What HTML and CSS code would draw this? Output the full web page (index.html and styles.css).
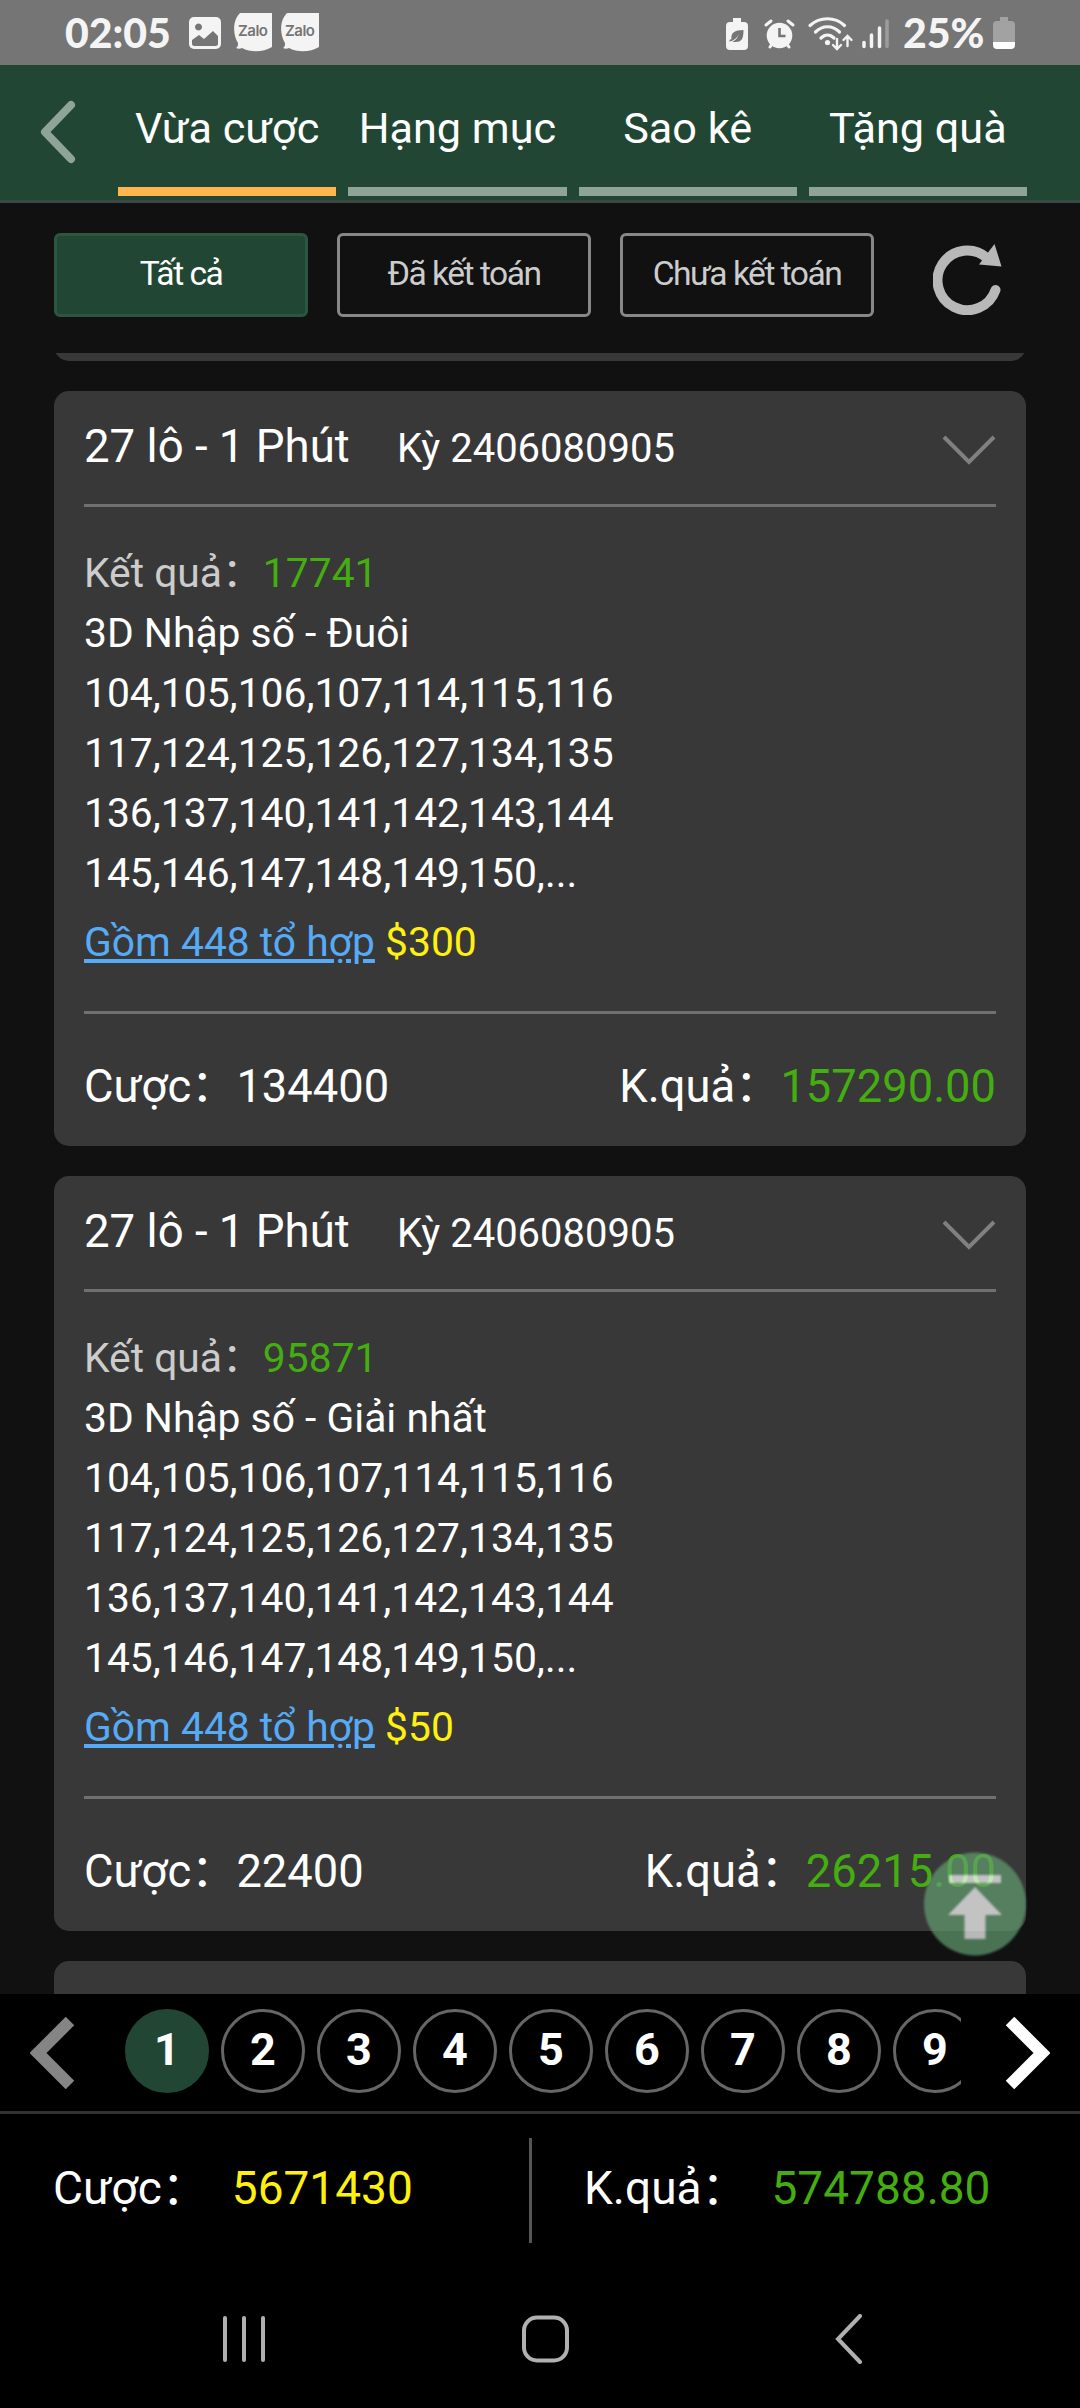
FILE: index.html
```html
<!DOCTYPE html>
<html lang="vi">
  <head>
    <meta charset="UTF-8" />
    <meta name="viewport" content="width=device-width, initial-scale=1.0" />
    <title>Vừa cược</title>
    <link rel="stylesheet" href="styles.css">
  </head>
  <body>
    <div class="status-bar">
      <span class="clock">02:05</span>
      <svg class="icon-photo" width="32" height="32" viewBox="0 0 32 32">
        <path fill="#f4f4f4" fill-rule="evenodd" d="M5 0h22a5 5 0 0 1 5 5v22a5 5 0 0 1-5 5H5a5 5 0 0 1-5-5V5a5 5 0 0 1 5-5zM9.500 6.500a3.500 3.500 0 1 0 .01 0zM3 23v3.500a2.500 2.500 0 0 0 2.500 2.500h21a2.500 2.500 0 0 0 2.500-2.500V19l-5-5-9 8-5-4z" />
      </svg>
      <span class="zalo">
        <svg width="38" height="39" viewBox="0 0 38 39"><path fill="#f4f4f4" d="M6 0h32v34c-8 5-21 6-30 1-2 1-4 1-6 0 2-1 2-3 2-5C-1 22-2 8 6 0z" /></svg>
        <span class="zalo-text">Zalo</span>
      </span>
      <span class="zalo">
        <svg width="38" height="39" viewBox="0 0 38 39"><path fill="#f4f4f4" d="M6 0h32v34c-8 5-21 6-30 1-2 1-4 1-6 0 2-1 2-3 2-5C-1 22-2 8 6 0z" /></svg>
        <span class="zalo-text">Zalo</span>
      </span>
      <svg class="status-icons" width="166" height="40" viewBox="725 12 166 40" fill="#f4f4f4">
        <path d="M733 17h8v4h3q4 0 4 4v20q0 4-4 4h-14q-4 0-4-4V25q0-4 4-4h3z" />
        <path fill="#757575" d="M743.500 29c0 9-2 12-8 12-2 0-3 0-4-1l-2 1 0-2 2-1c-1-6 3-9 12-9z" />
        <path d="M729 41q7-2 10-8-3 8-10 9z" />
        <circle cx="779.500" cy="34.500" r="12.800" />
        <path d="M766 24l5-4M793 24l-5-4M770 46l2-3M789 46l-2-3" stroke="#f4f4f4" stroke-width="3" stroke-linecap="round" />
        <path d="M779.500 27v8h6" fill="none" stroke="#757575" stroke-width="2.600" />
        <g fill="none" stroke="#f4f4f4" stroke-width="3.200" stroke-linecap="round">
          <path d="M810 24.500c10-9 25-9 34.500 0M815.500 31c7-7 17-7 24 0M821 37c4-4 9-4 13 0" />
          <path d="M837 38v9M833 44l4 4 4-4M847.500 45V36M843.500 39l4-4 4 4" stroke-width="2.400" />
        </g>
        <circle cx="827.500" cy="41.500" r="2.600" />
        <path d="M864 41.500v4M871.500 34v11.500M879.500 27v18.500" stroke="#f4f4f4" stroke-width="3.500" stroke-linecap="round" />
        <path d="M887 20v25.500" stroke="#9c9c9c" stroke-width="3.500" stroke-linecap="round" />
      </svg>
      <span class="battery-text">25%</span>
      <svg class="icon-battery" width="22" height="32" viewBox="0 0 22 32">
        <path fill="#a2a2a2" d="M7 0h8v4h3q4 0 4 4v17H0V8q0-4 4-4h3z" />
        <path fill="#fff" d="M0 25h22v3q0 4-4 4H4q-4 0-4-4z" />
      </svg>
    </div>

    <div class="header">
      <svg class="back" width="36" height="64" viewBox="0 0 36 64">
        <path d="M31 5L5 32l26 27" />
      </svg>
      <div class="tabs">
        <div class="tab active">Vừa cược</div>
        <div class="tab">Hạng mục</div>
        <div class="tab">Sao kê</div>
        <div class="tab">Tặng quà</div>
      </div>
    </div>

    <div class="filters">
      <button class="filter active">Tất cả</button>
      <button class="filter">Đã kết toán</button>
      <button class="filter">Chưa kết toán</button>
      <svg class="refresh" width="70" height="71" viewBox="0 0 70 71">
        <path d="M62.500 46A29.800 29.800 0 1 1 54 14" fill="none" stroke="#b8b8b8" stroke-width="10" stroke-linecap="round" />
        <path d="M61.500 0l7 22.500L46 20.500z" fill="#b8b8b8" />
      </svg>
    </div>

    <div class="list-wrap">
      <div class="list">
        <div class="card card-prev"></div>

        <div class="card">
          <div class="card-head">
            <span class="game-name">27 lô - 1 Phút</span>
            <span class="issue">Kỳ 2406080905</span>
            <svg class="arrow" width="54" height="32" viewBox="0 0 54 32"><path d="M2 3l25 25L52 3" /></svg>
          </div>
          <div class="card-body">
            <div class="line"><span class="label">Kết quả：</span><span class="win">17741</span></div>
            <div class="line">3D Nhập số - Đuôi</div>
            <div class="line">104,105,106,107,114,115,116</div>
            <div class="line">117,124,125,126,127,134,135</div>
            <div class="line">136,137,140,141,142,143,144</div>
            <div class="line">145,146,147,148,149,150,...</div>
            <div class="line combo"><a class="combo-link">Gồm 448 tổ hợp</a> <span class="unit">$300</span></div>
          </div>
          <div class="card-foot">
            <span>Cược：134400</span>
            <span>K.quả：<span class="win">157290.00</span></span>
          </div>
        </div>

        <div class="card">
          <div class="card-head">
            <span class="game-name">27 lô - 1 Phút</span>
            <span class="issue">Kỳ 2406080905</span>
            <svg class="arrow" width="54" height="32" viewBox="0 0 54 32"><path d="M2 3l25 25L52 3" /></svg>
          </div>
          <div class="card-body">
            <div class="line"><span class="label">Kết quả：</span><span class="win">95871</span></div>
            <div class="line">3D Nhập số - Giải nhất</div>
            <div class="line">104,105,106,107,114,115,116</div>
            <div class="line">117,124,125,126,127,134,135</div>
            <div class="line">136,137,140,141,142,143,144</div>
            <div class="line">145,146,147,148,149,150,...</div>
            <div class="line combo"><a class="combo-link">Gồm 448 tổ hợp</a> <span class="unit">$50</span></div>
          </div>
          <div class="card-foot">
            <span>Cược：22400</span>
            <span>K.quả：<span class="win">26215.00</span></span>
          </div>
        </div>

        <div class="card card-next"></div>
      </div>

      <svg class="to-top" width="104" height="106" viewBox="0 0 104 106">
        <ellipse cx="52" cy="53" rx="51" ry="51.500" fill="#629d6f" />
        <path fill="#fff" d="M26 24h52v8H26zM52 36l27 28H62.500v24h-21V64H25z" />
      </svg>
    </div>

    <div class="pager">
      <svg class="pager-arrow prev" width="46" height="72" viewBox="0 0 46 72"><path d="M40 4L8 36l32 32" /></svg>
      <div class="pages">
        <span class="page active">1</span>
        <span class="page">2</span>
        <span class="page">3</span>
        <span class="page">4</span>
        <span class="page">5</span>
        <span class="page">6</span>
        <span class="page">7</span>
        <span class="page">8</span>
        <span class="page">9</span>
      </div>
      <svg class="pager-arrow next" width="46" height="72" viewBox="0 0 46 72"><path d="M6 4l32 32L6 68" /></svg>
    </div>

    <div class="totals">
      <div class="total total-bet"><span>Cược：</span><span class="unit">5671430</span></div>
      <div class="total total-win"><span>K.quả：</span><span class="win">574788.80</span></div>
    </div>

    <div class="nav-bar">
      <svg width="42" height="48" viewBox="0 0 42 48"><path d="M2 3v42M21 3v42M40 3v42" /></svg>
      <svg width="47" height="48" viewBox="0 0 47 48"><rect x="2" y="2.500" width="43" height="43" rx="13" /></svg>
      <svg width="28" height="50" viewBox="0 0 28 50"><path d="M25 2L3 25l22 23" /></svg>
    </div>
  </body>
</html>
```
FILE: styles.css
```css
* {
  margin: 0;
  padding: 0;
  box-sizing: border-box;
}

body {
  width: 1080px;
  height: 2408px;
  overflow: hidden;
  display: flex;
  flex-direction: column;
  font-family: Roboto, "Noto Sans CJK SC", sans-serif;
  font-size: 40px;
  background: #111;
  color: #fff;
}

/* phone status bar */
.status-bar {
  height: 65px;
  flex-shrink: 0;
  display: flex;
  align-items: center;
  padding: 0 65px;
  background: #757575;
  color: #f4f4f4;
}

.clock,
.battery-text {
  font-family: Lato, sans-serif;
  font-size: 41px;
  font-weight: 900;
  line-height: 63px;
}

.clock {
  width: 124px;
}

.icon-photo {
  margin-right: 13px;
}

.zalo {
  position: relative;
  height: 39px;
  margin-right: 9px;
}

.zalo svg {
  display: block;
}

.zalo-text {
  position: absolute;
  left: 4px;
  top: 8px;
  font-family: Inter, sans-serif;
  font-size: 15px;
  font-weight: 600;
  line-height: 20px;
  letter-spacing: -0.5px;
  color: #757575;
}

.status-icons {
  margin-left: auto;
}

.battery-text {
  width: 90px;
  margin-left: 12px;
}

.header {
  height: 138px;
  flex-shrink: 0;
  display: flex;
  padding: 0 53px 0 40px;
  background: #214734;
  border-bottom: 3px solid #3b4743;
}

.back {
  margin: 35px 42px 0 0;
}

.back path {
  fill: none;
  stroke: #90a399;
  stroke-width: 8;
  stroke-linecap: round;
  stroke-linejoin: round;
}

.tabs {
  flex: 1;
  display: flex;
  gap: 12px;
}

.tab {
  flex: 1;
  height: 131px;
  font-size: 43.2px;
  line-height: 128px;
  text-align: center;
  white-space: nowrap;
  border-bottom: 9px solid #90a399;
}

.tab.active {
  border-color: #ffb54d;
}

.filters {
  height: 150px;
  flex-shrink: 0;
  display: flex;
  gap: 29px;
  padding: 30px 54px 0;
}

.filter {
  width: 254px;
  height: 84px;
  padding-bottom: 4px;
  background: transparent;
  border: 3px solid #888;
  border-radius: 6px;
  color: #ccc;
  font-family: inherit;
  font-size: 33.600px;
  letter-spacing: -1.5px;
}

.filter.active {
  background: #214734;
  border-color: #2e5541;
  color: #fff;
}

.refresh {
  margin: 11px 0 0 30px;
}

.list-wrap {
  position: relative;
  height: 1641px;
  flex-shrink: 0;
}

.list {
  height: 100%;
  overflow: hidden;
  display: flex;
  flex-direction: column;
  justify-content: flex-start;
  gap: 30px;
  padding: 0 54px;
}

.card {
  flex-shrink: 0;
  background: #383838;
  border-radius: 15px;
  padding: 0 30px;
}

.card-prev {
  height: 100px;
  margin-top: -92px;
}

.card-next {
  height: 755px;
}

.card-head {
  height: 116px;
  display: flex;
  align-items: baseline;
  line-height: 112px;
  border-bottom: 3px solid #707070;
}

.game-name {
  width: 313px;
  font-size: 45.600px;
}

.arrow {
  margin: 4px 0 0 auto;
  align-self: center;
}

.arrow path {
  fill: none;
  stroke: #808080;
  stroke-width: 4;
}

.card-body {
  padding: 36px 0 39px;
  border-bottom: 3px solid #707070;
  font-size: 40.800px;
}

.line {
  height: 60px;
  line-height: 61px;
  white-space: nowrap;
}

.label {
  color: #ccc;
}

.win {
  color: #44ae10;
}

.unit {
  color: #fff010;
}

.combo {
  margin-top: 9px;
}

.combo-link {
  color: #57aaf5;
  text-decoration: underline;
}

.card-foot {
  height: 132px;
  display: flex;
  justify-content: space-between;
  font-size: 45.300px;
  line-height: 145px;
}

.to-top {
  position: absolute;
  right: 53px;
  bottom: 37px;
  opacity: 0.7;
  filter: blur(1px);
}

.pager {
  height: 120px;
  flex-shrink: 0;
  display: flex;
  padding: 15px 30px 0;
  background: #000;
  border-bottom: 3px solid #333;
}

.pager-arrow {
  margin-top: 8px;
}

.pager-arrow path {
  fill: none;
  stroke: #fff;
  stroke-width: 12;
}

.pager-arrow.prev path {
  stroke: #858585;
}

.pages {
  width: 836px;
  height: 84px;
  margin: 0 43px 0 49px;
  overflow: hidden;
  display: flex;
  gap: 12px;
}

.page {
  width: 84px;
  height: 84px;
  flex-shrink: 0;
  border: 3px solid #666;
  border-radius: 50%;
  font-size: 45px;
  font-weight: 700;
  line-height: 76px;
  text-align: center;
}

.page.active {
  background: #214734;
  border-color: #214734;
}

.totals {
  height: 156px;
  flex-shrink: 0;
  display: flex;
  padding-top: 24px;
  background: #000;
  font-size: 46px;
  line-height: 101px;
}

.total {
  display: flex;
  gap: 24px;
  height: 105px;
}

.total-bet {
  width: 532px;
  padding-left: 53px;
  border-right: 3px solid #555;
}

.total-win {
  padding-left: 52px;
}

.nav-bar {
  flex: 1;
  display: flex;
  justify-content: space-between;
  align-items: center;
  padding: 0 217px 0 223px;
  background: #000;
}

.nav-bar svg {
  fill: none;
  stroke: #b0b0b0;
  stroke-width: 4;
  stroke-linecap: round;
}

/* home key sits left of the midpoint between its neighbours */
.nav-bar svg:nth-child(2) {
  margin-right: 9px;
}
```
